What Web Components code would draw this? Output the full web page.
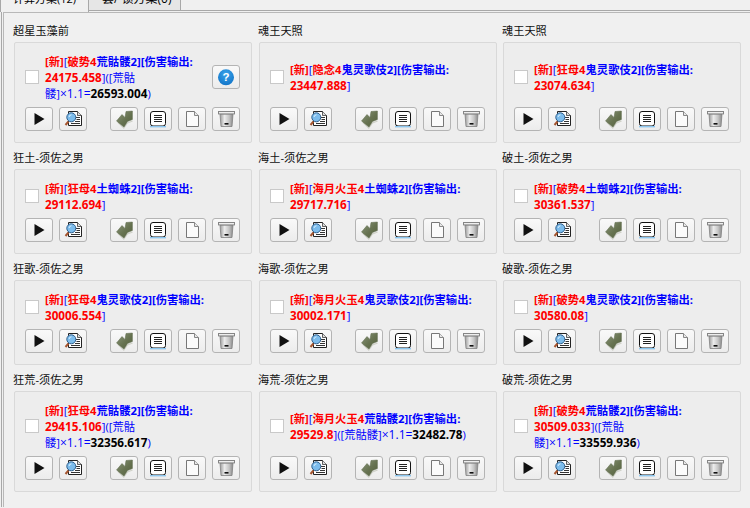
<!DOCTYPE html>
<html lang="zh">
<head>
<meta charset="utf-8">
<title>方案</title>
<style>
  html, body { margin: 0; height: 100%; overflow: hidden; background: #f0f0f0; }
</style>
</head>
<body>
<scheme-app></scheme-app>
<script>
const ICONS = {
  play: '<path d="M9.5 6 19.5 12 9.5 18Z" fill="#111"/>',
  search: `<path d="M9.5 4.5H18.5L22.5 8.5V18.5H9.5Z" fill="#fff" stroke="#222"/>
    <path d="M18.5 4.5V8.5H22.5" fill="#ddd" stroke="#222" stroke-width=".7"/>
    <path d="M17 10.5H21M17.5 12.5H21M16 14.5H21M12 16.5H21" stroke="#333"/>
    <path d="M9.5 14.5 6.5 18" stroke="#a4552f" stroke-width="2"/>
    <circle cx="12.3" cy="10.3" r="4.5" fill="#7cbcec" stroke="#2f5f8c"/>
    <path d="M10 10A2.6 2.6 0 0 1 12.5 7.8" stroke="#d9f0ff" fill="none"/>`,
  back: `<linearGradient id="ol" x1="0" y1="0" x2="1" y2="1"><stop offset="0" stop-color="#8a967a"/><stop offset=".55" stop-color="#667250"/><stop offset="1" stop-color="#55623f"/></linearGradient>
    <path d="M8 15.5 13.8 21 17.5 16 22.6 14" fill="none" stroke="#cfd1c8" stroke-width="1.2"/>
    <path d="M16 4.5 22.4 4V12.5L17.5 14.5 14 20 6.5 14 12 7.5 15 10.5Z" fill="url(#ol)" stroke="#5b6748" stroke-width=".5"/>`,
  list: `<rect x="6.5" y="4.5" width="15" height="14.5" rx="2.5" fill="#fff" stroke="#111"/>
    <path d="M6 19.7H22" stroke="#8cc6ee" stroke-width="1.4"/>
    <path d="M10 8.5H18M10 10.5H18M10 12.5H18M10 14.5H18" stroke="#222"/>`,
  page: '<path d="M8.5 4.5H16.5L20.5 8.5V19.5H8.5Z" fill="#fbfbfb" stroke="#777"/><path d="M16.5 4.5V8.5H20.5" fill="#e8e8e8" stroke="#888"/>',
  trash: `<linearGradient id="tb"><stop offset="0" stop-color="#9a9a9a"/><stop offset=".35" stop-color="#ececec"/><stop offset=".7" stop-color="#c4c4c4"/><stop offset="1" stop-color="#888"/></linearGradient>
    <path d="M8 7H21L20 19.5H9Z" fill="url(#tb)" stroke="#808080" stroke-width=".8"/>
    <rect x="6.5" y="4.5" width="16" height="2.4" fill="#eee" stroke="#858585"/>
    <rect x="12.5" y="16" width="4" height="1.6" fill="#111"/>`,
  help: `<radialGradient id="hb" cy=".3" r=".8"><stop offset="0" stop-color="#3aa3ea"/><stop offset="1" stop-color="#0d6fc4"/></radialGradient>
    <circle cx="14" cy="12.3" r="8" fill="url(#hb)"/>
    <text x="14" y="16.3" text-anchor="middle" font-family="'Liberation Sans',sans-serif" font-size="11.5" font-weight="700" fill="#fff">?</text>`
};

class ToolButton extends HTMLElement {
  constructor() {
    super();
    const shadow = this.attachShadow({mode: 'open'});
    shadow.innerHTML = `<style>
      :host { display: flex; align-items: center; justify-content: center; box-sizing: border-box; width: 28px; height: 24px;
        border: 1px solid #b4b4b4; border-radius: 3px; background: linear-gradient(#f9f9f9, #ececec); flex: none; }
      svg { display: block; }
    </style><svg width="26" height="22" viewBox="1 1 26 22">${ICONS[this.getAttribute('icon')] || ''}</svg>`;
  }
}
customElements.define('tool-button', ToolButton);

class TextRun extends HTMLElement {
  constructor() {
    super();
    this.attachShadow({mode: 'open'}).innerHTML = `<style>
      :host { color: #0000ff; line-height: 1; }
      :host([k=r]) { color: #ff0000; font-weight: 700; }
      :host([k=b]) { color: #0000ff; font-weight: 700; }
      :host([k=x]) { font-size: 12px; }
      :host([k=n]) { color: #ff0000; font-weight: 700; font-size: 11.7px; }
      :host([k=t]) { color: #000; font-weight: 700; font-size: 11.7px; }
    </style><slot></slot>`;
  }
}
customElements.define('text-run', TextRun);

class SchemeCard extends HTMLElement {
  constructor() {
    super();
    const help = this.hasAttribute('help') ? '<tool-button icon="help"></tool-button>' : '';
    this.attachShadow({mode: 'open'}).innerHTML = `<style>
      :host { display: flex; flex-direction: column; }
      .title { height: 19px; line-height: 16px; font-size: 11.2px; color: #111; white-space: nowrap; }
      .card { flex: 1; margin-left: 1px; width: 238px; box-sizing: border-box; display: flex; flex-direction: column;
        border: 1px solid #d9d9d9; border-radius: 2px; background: #ededed; padding: 10px 11px 11px 10px; }
      .top { flex: 1; display: flex; align-items: center; gap: 6px; }
      .check { width: 14px; height: 14px; box-sizing: border-box; flex: none; background: #fff; border: 1px solid #c9c9c9; }
      .text { flex: 1; font-size: 11.3px; line-height: 16px; white-space: nowrap; padding-top: 1px; margin-bottom: -1px; }
      .tools { display: flex; gap: 6px; margin-top: 6px; }
      .spacer { width: 17px; }
    </style>
    <div class="title">${this.getAttribute('name')}</div>
    <div class="card">
      <div class="top"><div class="check"></div><div class="text"><slot></slot></div>${help}</div>
      <div class="tools">
        <tool-button icon="play"></tool-button><tool-button icon="search"></tool-button>
        <div class="spacer"></div>
        <tool-button icon="back"></tool-button><tool-button icon="list"></tool-button>
        <tool-button icon="page"></tool-button><tool-button icon="trash"></tool-button>
      </div>
    </div>`;
  }
}
customElements.define('scheme-card', SchemeCard);

class TabStrip extends HTMLElement {
  constructor() {
    super();
    this.attachShadow({mode: 'open'}).innerHTML = `<style>
      :host { display: flex; height: 12px; overflow: hidden; font-size: 12px; color: #000; }
      .tab { box-sizing: border-box; white-space: nowrap; line-height: 16px; overflow: hidden; }
      .tab span { display: block; margin-top: -9px; }
      .on { width: 89px; height: 12px; padding-left: 12px; border-left: 1px solid #a8a8a8; border-right: 1px solid #a8a8a8; background: #f0f0f0; font-size: 11px; }
      .off { width: 92px; height: 11px; padding-left: 13px; border-right: 1px solid #a8a8a8; border-bottom: 1px solid #a8a8a8; background: #e6e6e6; }
      .rest { flex: 1; height: 11px; box-sizing: border-box; border-bottom: 1px solid #a8a8a8; }
    </style>
    <div class="tab on"><span>计算方案(12)</span></div>
    <div class="tab off"><span>套/ 锁方案(0)</span></div>
    <div class="rest"></div>`;
  }
}
customElements.define('tab-strip', TabStrip);

class SchemeApp extends HTMLElement {
  constructor() {
    super();
    this.attachShadow({mode: 'open'}).innerHTML = `<style>
      :host { display: block; width: 750px; height: 508px; overflow: hidden;
        font-family: "Open Sans", "Noto Sans CJK SC", sans-serif; }
      .outer { margin-left: 1px; border-left: 1px solid #a8a8a8; padding-left: 1px; }
      .panel { border-left: 1px solid #b8b8b8; border-top: 1px solid #b8b8b8; height: 495px; box-sizing: border-box; padding: 10px 0 0 9px;
        display: grid; grid-template-columns: 245px 244px 244px; row-gap: 7px; align-content: start; }
    </style>
    <tab-strip></tab-strip>
    <div class="outer"><div class="panel"><slot></slot></div></div>`;
  }
}
customElements.define('scheme-app', SchemeApp);

// 名称, 套装前缀, 小件, 伤害, 荒骷髅加成后的数值
const SCHEMES = [
  ['超星玉藻前', '破势4', '荒骷髅2', '24175.458', '26593.004', true],
  ['魂王天照', '隐念4', '鬼灵歌伎2', '23447.888'],
  ['魂王天照', '狂母4', '鬼灵歌伎2', '23074.634'],
  ['狂土-须佐之男', '狂母4', '土蜘蛛2', '29112.694'],
  ['海土-须佐之男', '海月火玉4', '土蜘蛛2', '29717.716'],
  ['破土-须佐之男', '破势4', '土蜘蛛2', '30361.537'],
  ['狂歌-须佐之男', '狂母4', '鬼灵歌伎2', '30006.554'],
  ['海歌-须佐之男', '海月火玉4', '鬼灵歌伎2', '30002.171'],
  ['破歌-须佐之男', '破势4', '鬼灵歌伎2', '30580.08'],
  ['狂荒-须佐之男', '狂母4', '荒骷髅2', '29415.106', '32356.617'],
  ['海荒-须佐之男', '海月火玉4', '荒骷髅2', '29529.8', '32482.78', false, true],
  ['破荒-须佐之男', '破势4', '荒骷髅2', '30509.033', '33559.936']
];

const run = (k, s) => `<text-run k="${k}">${s}</text-run>`;
const app = document.querySelector('scheme-app');
app.innerHTML = SCHEMES.map(([name, main, sub, dmg, total, help, oneLine]) => {
  let text = run('r', '[新]') + run('', '[') + run('r', main) + run('b', sub + ']') + run('b', '[伤害输出:') + '<br>' + run('n', dmg);
  if (!total) text += run('', ']');
  else if (oneLine) text += run('', ']([荒骷髅]') + run('x', '×1.1=') + run('t', total) + run('', ')');
  else text += run('', ']([荒骷') + '<br>' + run('', '髅]') + run('x', '×1.1=') + run('t', total) + run('', ')');
  return `<scheme-card name="${name}"${help ? ' help' : ''}>${text}</scheme-card>`;
}).join('');
</script>
</body>
</html>
